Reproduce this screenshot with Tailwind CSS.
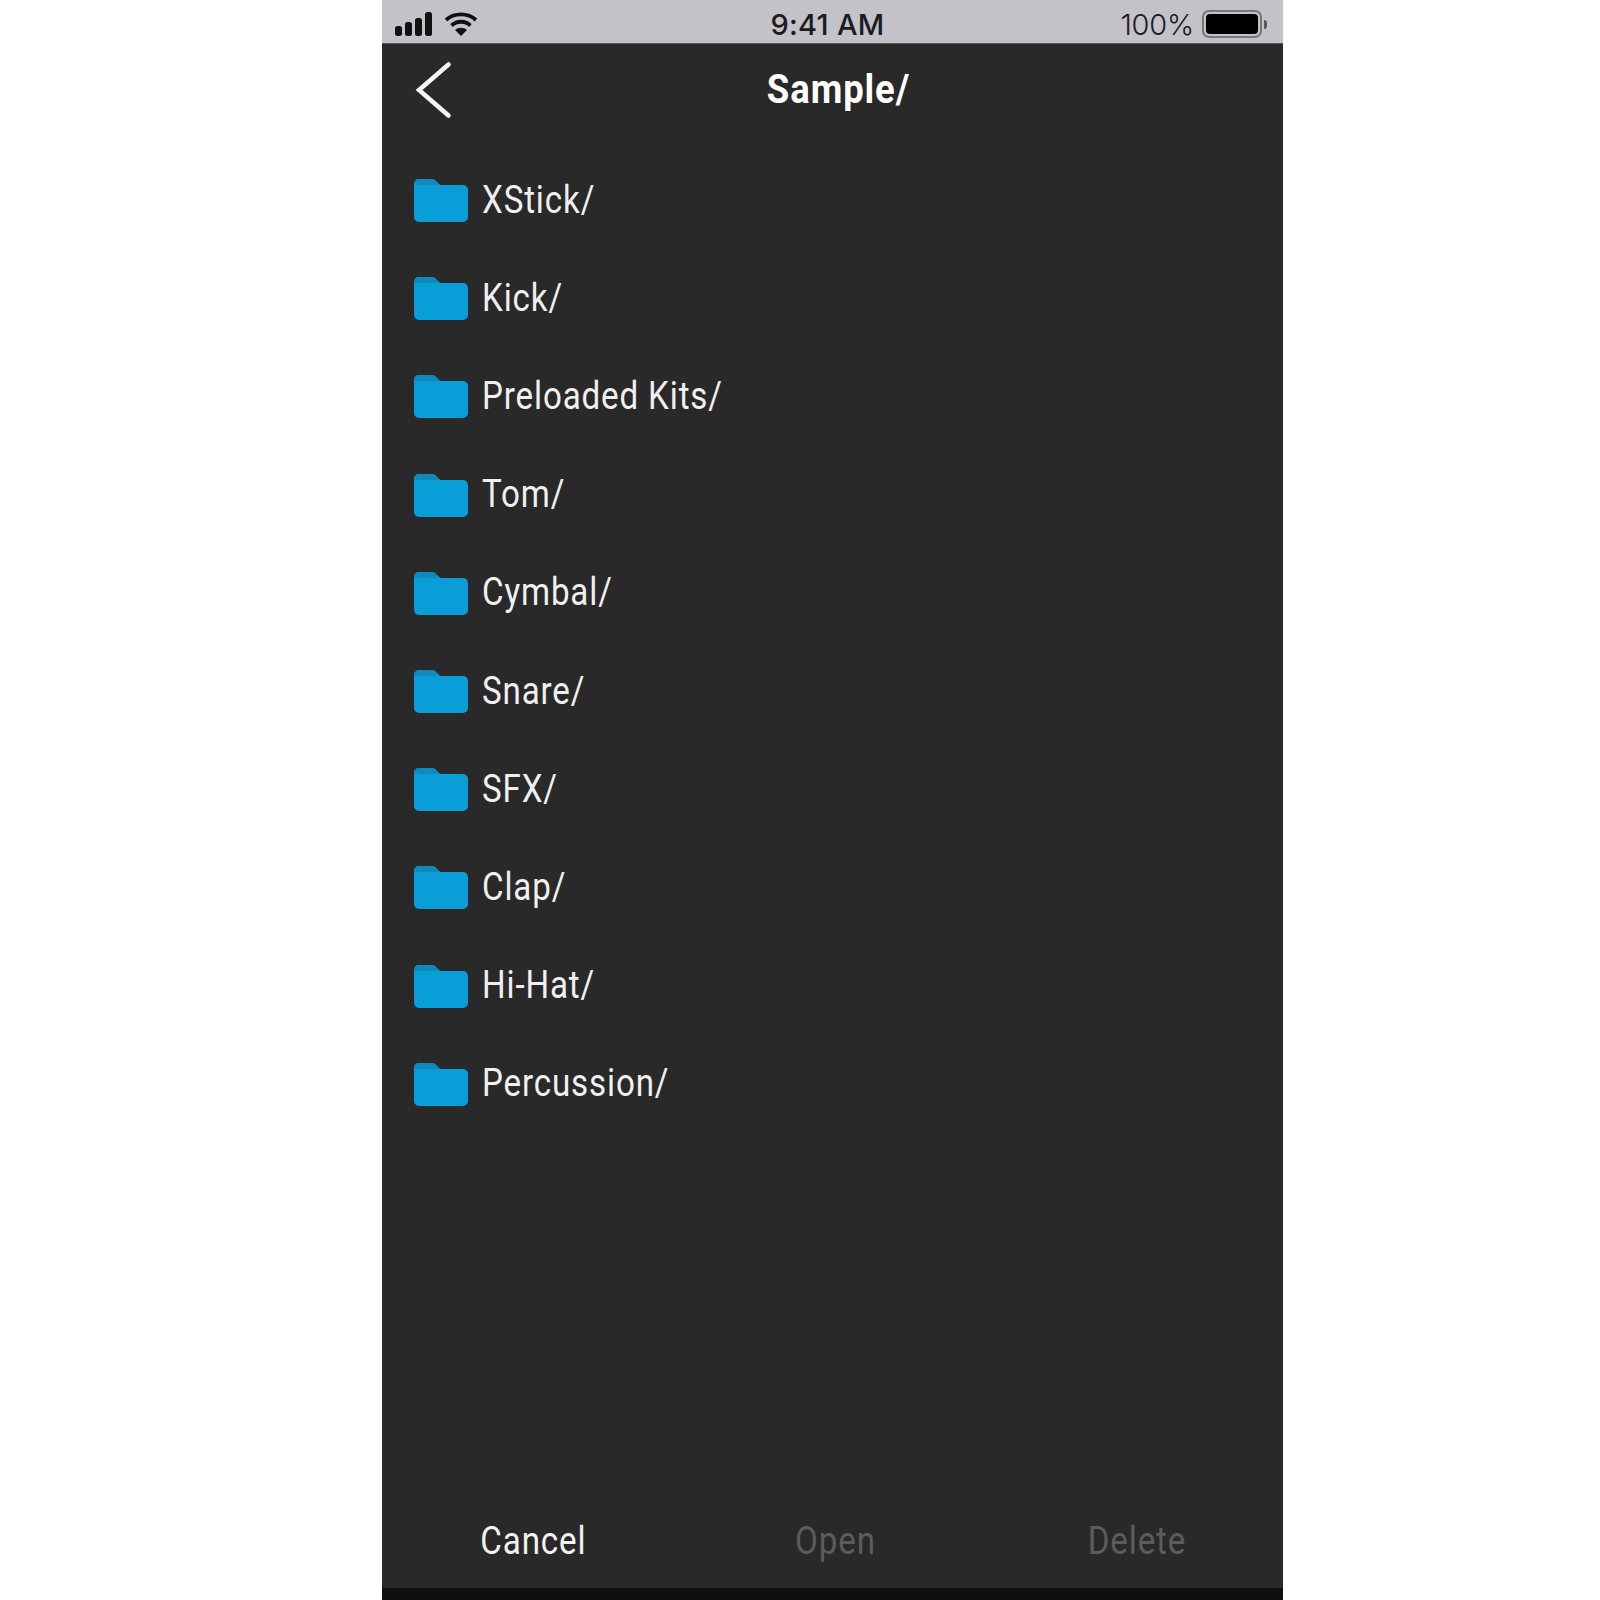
<!DOCTYPE html>
<html lang="en">
<head>
    <meta charset="UTF-8">
    <title>Sample</title>
    <script src="https://cdn.jsdelivr.net/npm/@tailwindcss/browser@4"></script>
</head>
<body class="bg-white font-['Roboto',sans-serif]">
    <div class="ml-[382px] w-[901px] h-[1600px] flex flex-col bg-[#292929]">
        <!-- status bar -->
        <div class="h-[44px] shrink-0 bg-[#c3c2c9] border-b border-[#55555a] grid grid-cols-3 items-center pt-[5px] pl-[12px] pr-[16px] text-[#1c1c1e] font-['Inter',sans-serif] text-[29px] leading-none">
            <div class="flex items-center gap-[10px]">
                <svg width="40" height="26" viewBox="0 0 40 26" fill="#111"><rect x="1" y="15" width="7" height="10" rx="2.500"/><rect x="11" y="11" width="7" height="14" rx="2.500"/><rect x="21" y="7" width="7" height="18" rx="2.500"/><rect x="31" y="1" width="7" height="24" rx="2.500"/></svg>
                <svg width="34" height="26" viewBox="0 0 34 26" fill="none" stroke="#111" stroke-width="3.800"><path d="M2 9C10 1.500 24 1.500 32 9"/><path d="M7.500 14.500C13 9.500 21 9.500 26.500 14.500"/><path d="M17 25l-6-6c3.500-3 8.500-3 12 0z" fill="#111" stroke="none"/></svg>
            </div>
            <div class="text-center"><span class="relative left-[-3px] font-medium tracking-[0.3px]">9:41 AM</span></div>
            <div class="flex items-center justify-end gap-[8px]">
                <span class="font-light tracking-[-0.2px]">100%</span>
                <div class="w-[60px] h-[28px] rounded-[7px] border-2 border-[#77777c] p-[2px]"><div class="w-full h-full rounded-[4px] bg-black"></div></div>
                <div class="w-[3px] h-[9px] rounded-r-full bg-[#55555a] ml-[-6px]"></div>
            </div>
        </div>

        <!-- header -->
        <div class="relative h-[91px] shrink-0 flex items-center justify-center">
            <svg class="absolute left-[33px] top-[17px]" width="40" height="58" viewBox="0 0 40 58" fill="none" stroke="#f5f5f5" stroke-width="4.500" stroke-linecap="round"><path d="M33.500 3.500L4 29l29.500 25.500"/></svg>
            <span class="relative left-[6px] inline-block scale-x-[0.89] tracking-[1px] text-[41px] font-bold text-white leading-none">Sample/</span>
        </div>

        <!-- folders -->
        <div class="pl-[32px] pt-[16px] flex-1">
            <div class="h-[98.2px] flex items-center gap-[14px]">
                <svg class="shrink-0" width="54" height="44" viewBox="0 0 54 44"><path d="M0 6a5 5 0 0 1 5-5h13a5 5 0 0 1 4 2l4 4h23a5 5 0 0 1 5 5v27a5 5 0 0 1-5 5H5a5 5 0 0 1-5-5z" fill="#0a9ed9"/><path d="M0 6a5 5 0 0 1 5-5h13a5 5 0 0 1 4 2l4 4H0z" fill="#1089bb"/></svg>
                <span class="inline-block origin-left scale-x-[0.85] tracking-[1px] text-[39px] text-[#f0f0f0] leading-none">XStick/</span>
            </div>
            <div class="h-[98.2px] flex items-center gap-[14px]">
                <svg class="shrink-0" width="54" height="44" viewBox="0 0 54 44"><path d="M0 6a5 5 0 0 1 5-5h13a5 5 0 0 1 4 2l4 4h23a5 5 0 0 1 5 5v27a5 5 0 0 1-5 5H5a5 5 0 0 1-5-5z" fill="#0a9ed9"/><path d="M0 6a5 5 0 0 1 5-5h13a5 5 0 0 1 4 2l4 4H0z" fill="#1089bb"/></svg>
                <span class="inline-block origin-left scale-x-[0.85] tracking-[1px] text-[39px] text-[#f0f0f0] leading-none">Kick/</span>
            </div>
            <div class="h-[98.2px] flex items-center gap-[14px]">
                <svg class="shrink-0" width="54" height="44" viewBox="0 0 54 44"><path d="M0 6a5 5 0 0 1 5-5h13a5 5 0 0 1 4 2l4 4h23a5 5 0 0 1 5 5v27a5 5 0 0 1-5 5H5a5 5 0 0 1-5-5z" fill="#0a9ed9"/><path d="M0 6a5 5 0 0 1 5-5h13a5 5 0 0 1 4 2l4 4H0z" fill="#1089bb"/></svg>
                <span class="inline-block origin-left scale-x-[0.85] tracking-[1px] text-[39px] text-[#f0f0f0] leading-none">Preloaded Kits/</span>
            </div>
            <div class="h-[98.2px] flex items-center gap-[14px]">
                <svg class="shrink-0" width="54" height="44" viewBox="0 0 54 44"><path d="M0 6a5 5 0 0 1 5-5h13a5 5 0 0 1 4 2l4 4h23a5 5 0 0 1 5 5v27a5 5 0 0 1-5 5H5a5 5 0 0 1-5-5z" fill="#0a9ed9"/><path d="M0 6a5 5 0 0 1 5-5h13a5 5 0 0 1 4 2l4 4H0z" fill="#1089bb"/></svg>
                <span class="inline-block origin-left scale-x-[0.85] tracking-[1px] text-[39px] text-[#f0f0f0] leading-none">Tom/</span>
            </div>
            <div class="h-[98.2px] flex items-center gap-[14px]">
                <svg class="shrink-0" width="54" height="44" viewBox="0 0 54 44"><path d="M0 6a5 5 0 0 1 5-5h13a5 5 0 0 1 4 2l4 4h23a5 5 0 0 1 5 5v27a5 5 0 0 1-5 5H5a5 5 0 0 1-5-5z" fill="#0a9ed9"/><path d="M0 6a5 5 0 0 1 5-5h13a5 5 0 0 1 4 2l4 4H0z" fill="#1089bb"/></svg>
                <span class="inline-block origin-left scale-x-[0.85] tracking-[1px] text-[39px] text-[#f0f0f0] leading-none">Cymbal/</span>
            </div>
            <div class="h-[98.2px] flex items-center gap-[14px]">
                <svg class="shrink-0" width="54" height="44" viewBox="0 0 54 44"><path d="M0 6a5 5 0 0 1 5-5h13a5 5 0 0 1 4 2l4 4h23a5 5 0 0 1 5 5v27a5 5 0 0 1-5 5H5a5 5 0 0 1-5-5z" fill="#0a9ed9"/><path d="M0 6a5 5 0 0 1 5-5h13a5 5 0 0 1 4 2l4 4H0z" fill="#1089bb"/></svg>
                <span class="inline-block origin-left scale-x-[0.85] tracking-[1px] text-[39px] text-[#f0f0f0] leading-none">Snare/</span>
            </div>
            <div class="h-[98.2px] flex items-center gap-[14px]">
                <svg class="shrink-0" width="54" height="44" viewBox="0 0 54 44"><path d="M0 6a5 5 0 0 1 5-5h13a5 5 0 0 1 4 2l4 4h23a5 5 0 0 1 5 5v27a5 5 0 0 1-5 5H5a5 5 0 0 1-5-5z" fill="#0a9ed9"/><path d="M0 6a5 5 0 0 1 5-5h13a5 5 0 0 1 4 2l4 4H0z" fill="#1089bb"/></svg>
                <span class="inline-block origin-left scale-x-[0.85] tracking-[1px] text-[39px] text-[#f0f0f0] leading-none">SFX/</span>
            </div>
            <div class="h-[98.2px] flex items-center gap-[14px]">
                <svg class="shrink-0" width="54" height="44" viewBox="0 0 54 44"><path d="M0 6a5 5 0 0 1 5-5h13a5 5 0 0 1 4 2l4 4h23a5 5 0 0 1 5 5v27a5 5 0 0 1-5 5H5a5 5 0 0 1-5-5z" fill="#0a9ed9"/><path d="M0 6a5 5 0 0 1 5-5h13a5 5 0 0 1 4 2l4 4H0z" fill="#1089bb"/></svg>
                <span class="inline-block origin-left scale-x-[0.85] tracking-[1px] text-[39px] text-[#f0f0f0] leading-none">Clap/</span>
            </div>
            <div class="h-[98.2px] flex items-center gap-[14px]">
                <svg class="shrink-0" width="54" height="44" viewBox="0 0 54 44"><path d="M0 6a5 5 0 0 1 5-5h13a5 5 0 0 1 4 2l4 4h23a5 5 0 0 1 5 5v27a5 5 0 0 1-5 5H5a5 5 0 0 1-5-5z" fill="#0a9ed9"/><path d="M0 6a5 5 0 0 1 5-5h13a5 5 0 0 1 4 2l4 4H0z" fill="#1089bb"/></svg>
                <span class="inline-block origin-left scale-x-[0.85] tracking-[1px] text-[39px] text-[#f0f0f0] leading-none">Hi-Hat/</span>
            </div>
            <div class="h-[98.2px] flex items-center gap-[14px]">
                <svg class="shrink-0" width="54" height="44" viewBox="0 0 54 44"><path d="M0 6a5 5 0 0 1 5-5h13a5 5 0 0 1 4 2l4 4h23a5 5 0 0 1 5 5v27a5 5 0 0 1-5 5H5a5 5 0 0 1-5-5z" fill="#0a9ed9"/><path d="M0 6a5 5 0 0 1 5-5h13a5 5 0 0 1 4 2l4 4H0z" fill="#1089bb"/></svg>
                <span class="inline-block origin-left scale-x-[0.85] tracking-[1px] text-[39px] text-[#f0f0f0] leading-none">Percussion/</span>
            </div>
        </div>

        <!-- bottom actions -->
        <div class="h-[84px] shrink-0 flex items-start pt-[18px] text-[39px] leading-none">
            <div class="w-[300px] text-center"><span class="relative left-[1px] inline-block scale-x-[0.85] tracking-[1px] text-[#f2f2f2]">Cancel</span></div>
            <div class="w-[300px] text-center"><span class="relative left-[3px] inline-block scale-x-[0.85] tracking-[1px] text-[#5c5c5c]">Open</span></div>
            <div class="w-[300px] text-center"><span class="relative left-[5px] inline-block scale-x-[0.85] tracking-[1px] text-[#5c5c5c]">Delete</span></div>
        </div>
        <div class="h-[12px] shrink-0 bg-[#0d0f11]"></div>
    </div>
</body>
</html>
